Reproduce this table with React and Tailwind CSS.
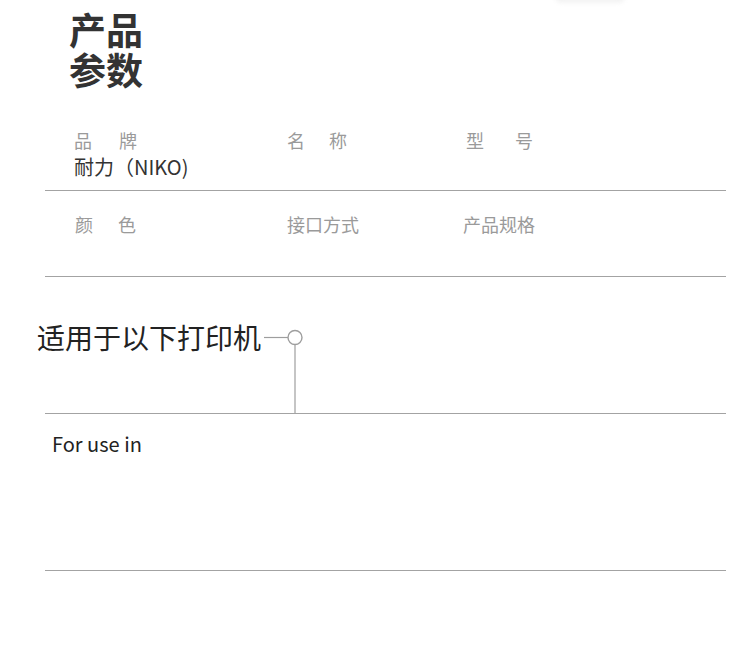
import React from 'react';

const font = { fontFamily: '"Noto Sans CJK SC", "Noto Sans", sans-serif' };

// label with two spaced characters
const Spaced = ({ a, b, gap }) => (
    <div className="flex text-[18px] leading-[24px] text-[#9a9a9a]">
        <span>{a}</span>
        <span className={gap}>{b}</span>
    </div>
);

export default function App() {
    return (
        <div className="relative w-[750px] h-[658px] bg-white overflow-hidden" style={font}>
            {/* faint shadow at top edge */}
            <div className="absolute -top-[9px] left-[555px] w-[70px] h-[12px] rounded-full bg-[#f3f3f3] blur-[2px]" />

            {/* Title */}
            <div className="pt-[9px] pl-[69px] text-[37px] leading-[40px] font-bold text-[#333333]">
                <div>产品</div>
                <div>参数</div>
            </div>

            {/* Parameters table */}
            <div className="ml-[45px] w-[681px]">
                <div className="pt-[39px] pb-[11px] border-b border-[#a3a3a3]">
                    <div className="flex">
                        <div className="w-[242px] pl-[29px]">
                            <Spaced a="品" b="牌" gap="ml-[27px]" />
                        </div>
                        <div className="w-[179px]">
                            <Spaced a="名" b="称" gap="ml-[24px]" />
                        </div>
                        <div>
                            <Spaced a="型" b="号" gap="ml-[31px]" />
                        </div>
                    </div>
                    <div className="mt-[3px] pl-[29px] text-[20px] leading-[24px] text-[#333333]">耐力（NIKO)</div>
                </div>
                <div className="h-[86px] pt-[21px] border-b border-[#a3a3a3]">
                    <div className="flex">
                        <div className="w-[242px] pl-[30px]">
                            <Spaced a="颜" b="色" gap="ml-[25px]" />
                        </div>
                        <div className="w-[176px] text-[18px] leading-[24px] text-[#9a9a9a]">接口方式</div>
                        <div className="text-[18px] leading-[24px] text-[#9a9a9a]">产品规格</div>
                    </div>
                </div>
            </div>

            {/* Compatible printers heading */}
            <div className="h-[136px] pt-[44px] pl-[37px] flex items-start">
                <div className="text-[28px] leading-[32px] text-[#222222] whitespace-nowrap">适用于以下打印机</div>
                <svg width="40" height="92" className="shrink-0 ml-[3px]">
                    <line x1="0" y1="16.5" x2="24" y2="16.5" stroke="#9e9e9e" strokeWidth="1.2" />
                    <circle cx="31" cy="16.5" r="7" fill="white" stroke="#9e9e9e" strokeWidth="1.4" />
                    <line x1="31" y1="23.5" x2="31" y2="92" stroke="#9e9e9e" strokeWidth="1.2" />
                </svg>
            </div>

            <div className="ml-[45px] w-[681px] h-[158px] pt-[16px] border-t border-b border-[#a3a3a3]">
                <div className="pl-[7px] text-[20px] leading-[28px] text-[#222222]">For use in</div>
            </div>
        </div>
    );
}
